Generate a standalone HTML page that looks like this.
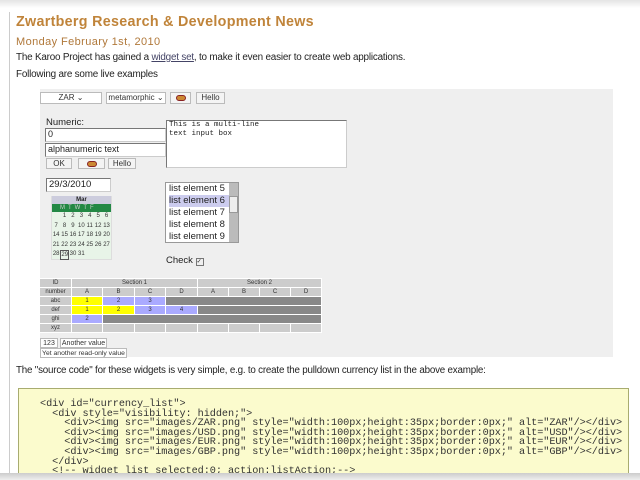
<!DOCTYPE html>
<html><head><meta charset="utf-8">
<style>
*{margin:0;padding:0;box-sizing:border-box}
body{width:640px;height:480px;overflow:hidden;background:#fff;font-family:"Liberation Sans",sans-serif;position:relative;color:#222}
.a{position:absolute;white-space:nowrap}
.btn{position:absolute;background:#f4f4f4;border:1px solid #bbb;font-size:8px;text-align:center;line-height:9px;color:#333;white-space:nowrap;overflow:hidden}
.inp{position:absolute;background:#fff;border:1px solid #777;border-right-color:#ccc;border-bottom-color:#ccc;font-size:9px;padding-left:2px;line-height:11px}
.icon{display:inline-block;width:10px;height:6px;border-radius:4px;background:#c83;border:1px solid #822;vertical-align:middle}
table.t{border-collapse:collapse;position:absolute;left:39px;top:278px;font-size:6px;text-align:center}
.t td{border:1px solid #fff;height:9px;padding:0;line-height:7px;color:#333}
.h{background:#ccc}
.y{background:#ff0}.b{background:#aaf}.g{background:#888}.l{background:#ccc}
pre{position:absolute;left:40px;top:400px;font-family:"Liberation Mono",monospace;font-size:10.2px;line-height:9.6px;color:#333;letter-spacing:-0.05px}
.cal{position:absolute;left:52px;top:212px;display:grid;grid-template-columns:repeat(7,8.4px);grid-auto-rows:9.5px;font-size:6px;line-height:9.5px;text-align:center;color:#333}
</style></head><body>
<div class="a" style="left:9px;top:12px;width:1px;height:462px;background:#ccc"></div>
<div class="a" style="left:0;top:0;width:640px;height:8px;background:linear-gradient(#e4e4e4,#fff)"></div>
<div class="a" style="left:16px;top:14px;font-size:14.3px;font-weight:bold;color:#c0843a;letter-spacing:0.3px">Zwartberg Research &amp; Development News</div>
<div class="a" style="left:16px;top:36px;font-size:11px;color:#b0783a;letter-spacing:0.4px">Monday February 1st, 2010</div>
<div class="a" style="left:16px;top:52px;font-size:9.9px;letter-spacing:-0.2px">The Karoo Project has gained a <u style="color:#446">widget set</u>, to make it even easier to create web applications.</div>
<div class="a" style="left:16px;top:69px;font-size:9.9px;letter-spacing:-0.2px">Following are some live examples</div>

<div class="a" style="left:40px;top:89px;width:573px;height:268px;background:#efefef"></div>
<div class="btn" style="left:40px;top:92px;width:62px;height:12px;background:#fff">ZAR &#8964;</div>
<div class="btn" style="left:106px;top:92px;width:60px;height:12px;background:#fff">metamorphic &#8964;</div>
<div class="btn" style="left:170px;top:92px;width:21px;height:12px"><span class="icon"></span></div>
<div class="btn" style="left:196px;top:92px;width:29px;height:12px">Hello</div>

<div class="a" style="left:46px;top:117px;font-size:9.5px">Numeric:</div>
<div class="inp" style="left:45px;top:128px;width:121px;height:14px">0</div>
<div class="inp" style="left:45px;top:143px;width:121px;height:14px">alphanumeric text</div>
<div class="btn" style="left:46px;top:158px;width:26px;height:11px">OK</div>
<div class="btn" style="left:78px;top:158px;width:27px;height:11px"><span class="icon"></span></div>
<div class="btn" style="left:108px;top:158px;width:28px;height:11px">Hello</div>
<div class="inp" style="left:166px;top:120px;width:181px;height:48px;font-family:'Liberation Mono',monospace;font-size:7.5px;line-height:9px">This is a multi-line<br>text input box</div>

<div class="inp" style="left:46px;top:178px;width:65px;height:14px;font-size:9.5px">29/3/2010</div>
<div class="a" style="left:51px;top:196px;width:61px;height:64px;background:#e8f4e8;border:1px solid #ddd"></div>
<div class="a" style="left:52px;top:196px;width:59px;height:8px;background:#ccd;font-size:6px;text-align:center;font-weight:bold;line-height:8px">Mar</div>
<div class="a" style="left:52px;top:204px;width:59px;height:8px;background:#284;font-size:6px;line-height:8px;color:#ccc;letter-spacing:3px;padding-left:8px">MTWTF</div>
<div class="cal"><span></span><span>1</span><span>2</span><span>3</span><span>4</span><span>5</span><span>6</span><span>7</span><span>8</span><span>9</span><span>10</span><span>11</span><span>12</span><span>13</span><span>14</span><span>15</span><span>16</span><span>17</span><span>18</span><span>19</span><span>20</span><span>21</span><span>22</span><span>23</span><span>24</span><span>25</span><span>26</span><span>27</span><span>28</span><span style="border:1px solid #555">29</span><span>30</span><span>31</span></div>

<div class="inp" style="left:165px;top:182px;width:74px;height:61px;font-size:9.5px;line-height:12px;padding-left:3px;border-color:#999">list element 5<br><span style="background:#cce;display:inline-block;width:62px">list element 6</span><br>list element 7<br>list element 8<br>list element 9</div>
<div class="a" style="left:229px;top:183px;width:9px;height:59px;background:#bbb"></div>
<div class="a" style="left:229px;top:196px;width:9px;height:17px;background:#eee;border:1px solid #999"></div>
<div class="a" style="left:166px;top:255px;font-size:9.5px">Check <span style="display:inline-block;width:8px;height:8px;border:1px solid #777;font-size:6px;line-height:6px">&#10003;</span></div>

<table class="t">
<tr><td class="h" style="width:32px">ID</td><td class="h" colspan="4">Section 1</td><td class="h" colspan="4">Section 2</td></tr>
<tr><td class="h">number</td><td class="h" style="width:31px">A</td><td class="h" style="width:32px">B</td><td class="h" style="width:31px">C</td><td class="h" style="width:32px">D</td><td class="h" style="width:31px">A</td><td class="h" style="width:31px">B</td><td class="h" style="width:31px">C</td><td class="h" style="width:31px">D</td></tr>
<tr><td class="h">abc</td><td class="y">1</td><td class="b">2</td><td class="b">3</td><td class="g" colspan="5"></td></tr>
<tr><td class="h">def</td><td class="y">1</td><td class="y">2</td><td class="b">3</td><td class="b">4</td><td class="g" colspan="4"></td></tr>
<tr><td class="h">ghi</td><td class="b">2</td><td class="g" colspan="7"></td></tr>
<tr><td class="h">xyz</td><td class="l"></td><td class="l"></td><td class="l"></td><td class="l"></td><td class="l"></td><td class="l"></td><td class="l"></td><td class="l"></td></tr>
</table>
<div class="btn" style="left:40px;top:338px;width:18px;height:10px;background:#fff;font-size:7px">123</div>
<div class="btn" style="left:60px;top:338px;width:47px;height:10px;background:#fff;font-size:7px">Another value</div>
<div class="btn" style="left:40px;top:348px;width:87px;height:10px;background:#fff;font-size:6.8px">Yet another read-only value</div>

<div class="a" style="left:16px;top:365px;font-size:9.8px;letter-spacing:-0.2px">The "source code" for these widgets is very simple, e.g. to create the pulldown currency list in the above example:</div>

<div class="a" style="left:18px;top:388px;width:611px;height:92px;background:#fbfbcd;border:1px solid #a8ac70"></div>
<pre>&lt;div id="currency_list"&gt;
  &lt;div style="visibility: hidden;"&gt;
    &lt;div&gt;&lt;img src="images/ZAR.png" style="width:100px;height:35px;border:0px;" alt="ZAR"/&gt;&lt;/div&gt;
    &lt;div&gt;&lt;img src="images/USD.png" style="width:100px;height:35px;border:0px;" alt="USD"/&gt;&lt;/div&gt;
    &lt;div&gt;&lt;img src="images/EUR.png" style="width:100px;height:35px;border:0px;" alt="EUR"/&gt;&lt;/div&gt;
    &lt;div&gt;&lt;img src="images/GBP.png" style="width:100px;height:35px;border:0px;" alt="GBP"/&gt;&lt;/div&gt;
  &lt;/div&gt;
  &lt;!-- widget list selected:0; action:listAction;--&gt;</pre>
<div class="a" style="left:0;top:473px;width:640px;height:7px;background:linear-gradient(#ccc,#eee)"></div>
</body></html>
